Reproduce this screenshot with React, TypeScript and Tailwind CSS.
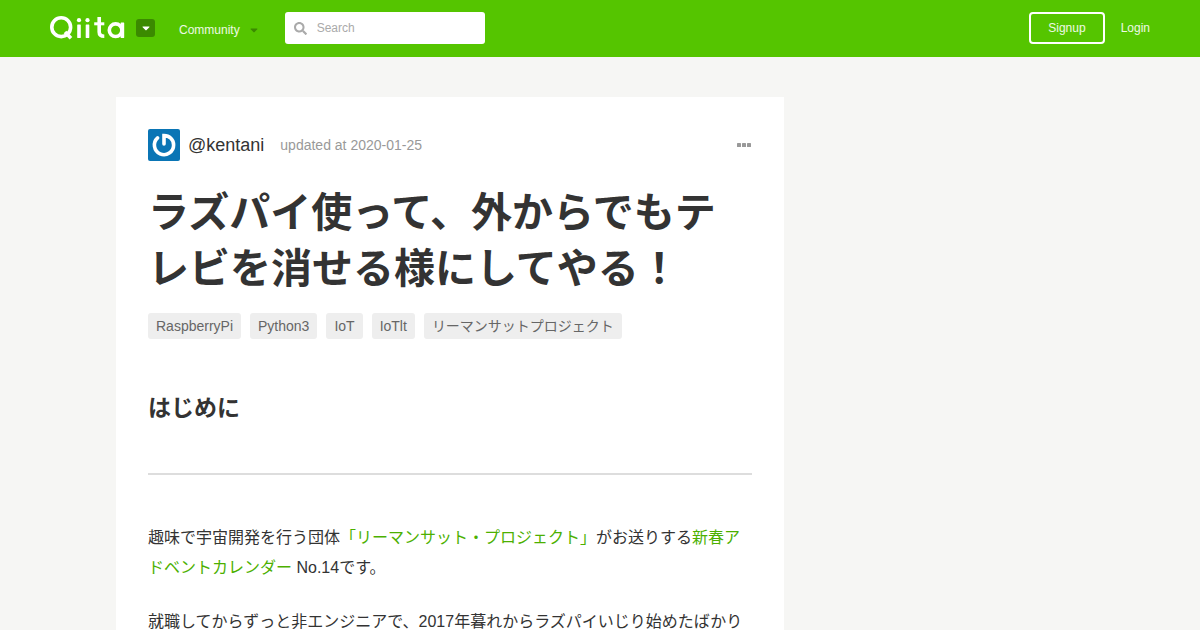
import { FaCaretDown, FaSearch } from "react-icons/fa";

const tags = ["RaspberryPi", "Python3", "IoT", "IoTlt", "リーマンサットプロジェクト"];

const Logo = () => (
	<svg
		width="76"
		height="24"
		viewBox="0 0 76 24"
		fill="none"
		stroke="#fff"
		strokeWidth="3.6"
		role="img"
		aria-label="Qiita"
	>
		<circle cx="11.2" cy="11.2" r="9.4" />
		<line x1="15" y1="16" x2="21" y2="22.2" />
		<g fill="#fff" stroke="none">
			<circle cx="29" cy="4.2" r="2.1" />
			<rect x="27.2" y="8.6" width="3.6" height="13.4" rx="0.4" />
			<circle cx="37.5" cy="4.2" r="2.1" />
			<rect x="35.7" y="8.6" width="3.6" height="13.4" rx="0.4" />
			<rect x="70.6" y="6.6" width="3.6" height="15.4" rx="0.4" />
		</g>
		<path d="M49.2 1V16Q49.2 20.2 54.3 20.2" />
		<line x1="44.2" y1="7.8" x2="54.3" y2="7.8" strokeWidth="3" />
		<circle cx="65.6" cy="14.2" r="6.3" />
	</svg>
);

const Header = () => (
	<header className="flex h-[57px] items-center justify-between bg-[#55c500] px-[50px] pb-px text-xs text-white">
		<div className="flex items-center">
			<a href="#">
				<Logo />
			</a>
			<button
				aria-label="Menu"
				className="ml-[10px] flex h-[18px] w-[19px] items-center justify-center rounded-[3px] bg-[#3b8a00]"
			>
				<FaCaretDown size={12} />
			</button>
			<button className="ml-6 flex items-center gap-2 pt-1 text-white/90">
				Community
				<FaCaretDown size={12} className="text-[#3b8a00]" />
			</button>
			<label className="ml-[25px] flex h-8 w-[200px] items-center gap-[10px] rounded-[3px] bg-white px-[9px]">
				<FaSearch size={13} className="shrink-0 text-[#aaa]" />
				<input
					type="search"
					aria-label="Search"
					placeholder="Search"
					className="w-full min-w-0 text-[#333] outline-none placeholder:text-[#aaa]"
				/>
			</label>
		</div>
		<div className="flex items-center gap-4">
			<a href="#" className="flex h-8 items-center rounded-[4px] border-2 border-white px-[17px] text-white/90">
				Signup
			</a>
			<a href="#" className="text-white/90">
				Login
			</a>
		</div>
	</header>
);

const Avatar = () => (
	<svg width="32" height="32" viewBox="0 0 32 32" fill="none" stroke="#fff" strokeWidth="3.6" strokeLinecap="round" aria-hidden="true">
		<rect width="32" height="32" rx="2" fill="#0a75b5" stroke="none" />
		<path d="M16 15V6.6C21.5 6.6 25.6 10.7 25.6 16A9.6 9.6 0 1 1 9.6 8.9" />
	</svg>
);

const App = () => {
	return (
		<div className="h-screen overflow-hidden bg-[#f6f6f4] font-['Liberation_Sans','Noto_Sans_CJK_JP',sans-serif] text-[#333]">
			<Header />
			<main className="mx-auto mt-10 max-w-[968px]">
				<article className="max-w-[668px] bg-white p-8">
					<div className="flex items-center">
						<Avatar />
						<a href="#" className="ml-2 text-lg">
							@kentani
						</a>
						<span className="ml-4 text-sm text-[#999]">updated at 2020-01-25</span>
						<button aria-label="More" className="ml-auto">
							<svg width="15" height="4" viewBox="0 0 15 4" fill="#999">
								<rect width="4" height="4" rx="0.6" />
								<rect x="5" width="4" height="4" rx="0.6" />
								<rect x="10" width="4" height="4" rx="0.6" />
							</svg>
						</button>
					</div>
					<h1 className="mt-6 text-[41px] leading-[56px] font-bold">
						ラズパイ使って、外からでもテレビを消せる様にしてやる！
					</h1>
					<div className="mt-4 flex flex-wrap gap-[9px] text-sm text-[#666]">
						{tags.map((tag) => (
							<a key={tag} href="#" className="h-[26px] rounded-[3px] bg-[#eee] px-2 leading-[26px]">
								{tag}
							</a>
						))}
					</div>
					<h2 className="mt-[52px] text-[23px] leading-[34px] font-bold">はじめに</h2>
					<hr className="my-12 border-t-2 border-[#ddd]" />
					<div className="space-y-6 text-base leading-[30px]">
						<p>
							趣味で宇宙開発を行う団体
							<a href="#" className="text-[#4cb000]">
								「リーマンサット・プロジェクト」
							</a>
							がお送りする
							<a href="#" className="text-[#4cb000]">
								新春アドベントカレンダー
							</a>{" "}
							No.14です。
						</p>
						<p>就職してからずっと非エンジニアで、2017年暮れからラズパイいじり始めたばかり</p>
					</div>
				</article>
			</main>
		</div>
	);
};

export default App;
